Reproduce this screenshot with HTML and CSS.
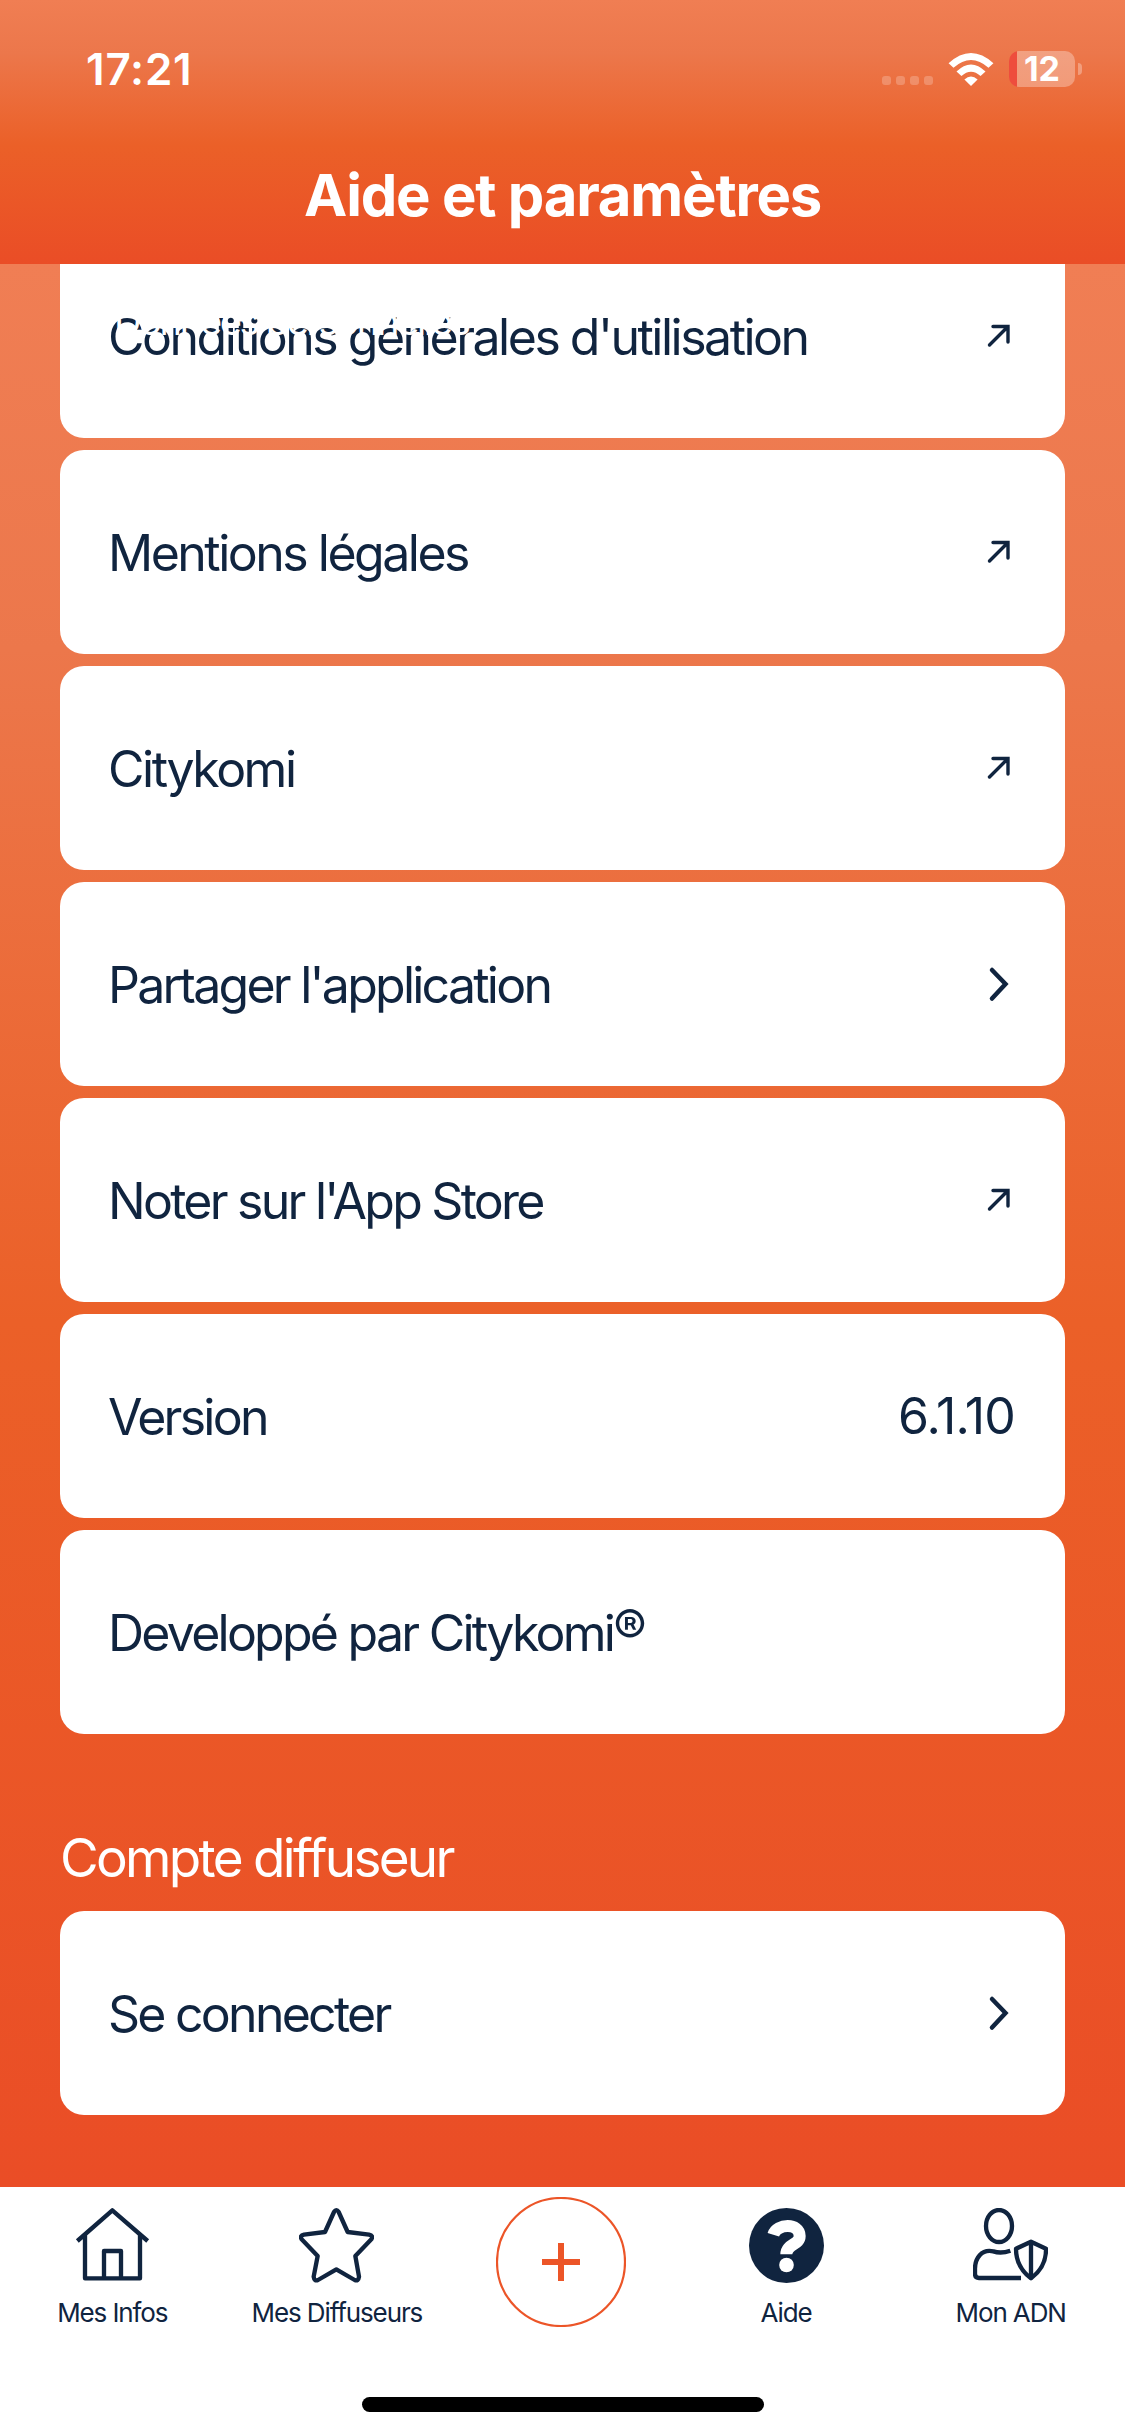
FILE: index.html
```
<!DOCTYPE html>
<html lang="fr">
<head>
  <meta charset="UTF-8">
  <meta name="viewport" content="width=device-width, initial-scale=1.0">
  <title>Aide et paramètres</title>
  <link rel="stylesheet" href="styles.css">
</head>
<body>
  <header class="header">
    <div class="status">
      <span class="time">17:21</span>
      <div class="status-icons">
        <div class="signal"><i></i><i></i><i></i><i></i></div>
        <svg class="wifi" viewBox="0 0 138 100">
          <path d="M1 31Q69-31 137 31L122 45Q69-2 16 45Z"/>
          <path d="M25 56Q69 13 113 56L98 70Q69 44 40 70Z"/>
          <path d="M49 80Q69 62 89 80L69 100Z"/>
        </svg>
        <div class="battery"><span>12</span></div>
        <div class="battery-tip"></div>
      </div>
    </div>
    <h1 class="title">Aide et paramètres</h1>
  </header>

  <main class="content">
    <span class="ghost">Données personnelles</span>
    <div class="list">
      <a class="card">
        <span class="label long">Conditions générales d'utilisation</span>
        <svg class="icon" viewBox="0 0 30 36"><path class="thin" d="M4.5 27L23 8.5M8 8.5H23V24"/></svg>
      </a>
      <a class="card">
        <span class="label long">Mentions légales</span>
        <svg class="icon" viewBox="0 0 30 36"><path class="thin" d="M4.5 27L23 8.5M8 8.5H23V24"/></svg>
      </a>
      <a class="card">
        <span class="label long">Citykomi</span>
        <svg class="icon" viewBox="0 0 30 36"><path class="thin" d="M4.5 27L23 8.5M8 8.5H23V24"/></svg>
      </a>
      <a class="card">
        <span class="label">Partager l'application</span>
        <svg class="icon" viewBox="0 0 30 36"><path d="M7 4L20.5 18L7 32.5"/></svg>
      </a>
      <a class="card">
        <span class="label">Noter sur l'App Store</span>
        <svg class="icon" viewBox="0 0 30 36"><path class="thin" d="M4.5 27L23 8.5M8 8.5H23V24"/></svg>
      </a>
      <div class="card">
        <span class="label">Version</span>
        <span class="value">6.1.10</span>
      </div>
      <div class="card">
        <span class="label">Developpé par Citykomi<span class="reg">®</span></span>
      </div>
    </div>

    <h2 class="section">Compte diffuseur</h2>
    <a class="card">
      <span class="label">Se connecter</span>
      <svg class="icon" viewBox="0 0 30 36"><path d="M7 4L20.5 18L7 32.5"/></svg>
    </a>
  </main>

  <nav class="tabs">
    <a class="tab">
      <svg class="tab-icon" viewBox="0 0 225 225">
        <path d="M7 99L112 7L218 99M30 82V211H195V82M87 211V129H138V211"/>
      </svg>
      <span>Mes Infos</span>
    </a>
    <a class="tab">
      <svg class="tab-icon" viewBox="0 0 225 225">
        <path d="M105 12Q112 1 119 12L146 72L210 80Q224 83 217 94L169 144L180 206Q178 221 167 216L112 184L57 216Q46 221 44 206L56 144L8 94Q1 83 15 80L78 72Z"/>
      </svg>
      <span>Mes Diffuseurs</span>
    </a>
    <a class="tab">
      <svg class="add" viewBox="0 0 130 130">
        <circle cx="65" cy="65" r="64"/>
        <path d="M65 46V84M46 65H84"/>
      </svg>
    </a>
    <a class="tab">
      <svg class="tab-icon help" viewBox="0 0 225 225">
        <circle class="disc" cx="112.5" cy="112.5" r="112.5"/>
        <path d="M73 80C83 47 152 43 152 84C152 112 112 107 112 139"/>
        <circle class="dot" cx="112.5" cy="171" r="22"/>
      </svg>
      <span>Aide</span>
    </a>
    <a class="tab">
      <svg class="tab-icon" viewBox="0 0 225 225">
        <ellipse cx="78" cy="54" rx="39" ry="48"/>
        <path d="M112 128Q84 138 61 130C25 122 6 152 6 182V198Q6 210 18 210H144"/>
        <path d="M174 101L219 122Q220 177 174 211Q129 177 129 122ZM174 101V211"/>
      </svg>
      <span>Mon ADN</span>
    </a>
    <div class="home-bar"></div>
  </nav>
</body>
</html>
```
FILE: styles.css
```
* {
  box-sizing: border-box;
}

body {
  margin: 0;
  width: 1125px;
  height: 2436px;
  display: flex;
  flex-direction: column;
  overflow: hidden;
  font-family: Inter, "Liberation Sans", sans-serif;
  color: #10243f;
}

.header {
  height: 264px;
  color: white;
  background: linear-gradient(#f07e53, #ec774b 20%, #eb6028 55%, #ea4d26);
}

.status {
  height: 138px;
  padding: 0 43px 0 86px;
  display: flex;
  justify-content: space-between;
  align-items: center;
}

.time {
  font-size: 44px;
  font-weight: 600;
  letter-spacing: 0.8px;
}

.status-icons {
  display: flex;
  align-items: center;
}

.signal {
  display: flex;
  gap: 5px;
  padding-top: 22px;
  margin-right: 15px;
}

.signal i {
  width: 9px;
  height: 9px;
  border-radius: 3px;
  background: rgba(255, 255, 255, 0.22);
}

.wifi {
  width: 46px;
  height: 33px;
  margin-right: 15px;
  fill: white;
}

.battery {
  width: 66px;
  height: 36px;
  border-radius: 10px;
  background: linear-gradient(90deg, #ee4d3d 8px, rgba(255, 255, 255, 0.3) 8px);
  font-size: 34px;
  font-weight: 700;
  line-height: 36px;
  text-align: center;
}

.battery-tip {
  width: 4px;
  height: 12px;
  margin-left: 3px;
  border-radius: 0 4px 4px 0;
  background: rgba(255, 255, 255, 0.3);
}

.title {
  margin: 0;
  font-size: 58px;
  font-weight: 700;
  line-height: 114px;
  text-align: center;
  letter-spacing: -1.2px;
}

.content {
  position: relative;
  height: 1923px;
  padding: 0 60px;
  overflow: hidden;
  background: linear-gradient(#f07e54, #ec774b 20%, #eb6028 55%, #ea4d26);
}

.list {
  display: flex;
  flex-direction: column;
  gap: 12px;
  margin-top: -30px;
}

.card {
  height: 204px;
  padding: 0 50px 0 48px;
  display: flex;
  justify-content: space-between;
  align-items: center;
  border-radius: 24px;
  background: white;
  font-size: 50px;
}

.label {
  padding-top: 2px;
  letter-spacing: -2.75px;
}

.label.long {
  letter-spacing: -2.5px;
}

.value {
  letter-spacing: -0.8px;
}

.icon {
  width: 30px;
  height: 36px;
  fill: none;
  stroke: #10243f;
  stroke-width: 4.5;
  stroke-linecap: round;
}

.icon .thin {
  stroke-width: 3.4;
}

.reg {
  position: relative;
  top: -5px;
}

/* old heading left floating above the first row */
.ghost {
  position: absolute;
  top: 30px;
  left: 114px;
  color: white;
  font-size: 38px;
  line-height: 54px;
  letter-spacing: -2.3px;
}

.section {
  margin: 0;
  padding-top: 88px;
  height: 177px;
  color: white;
  font-size: 53px;
  font-weight: 400;
  line-height: 72px;
  letter-spacing: -2.7px;
}

.tabs {
  position: relative;
  height: 249px;
  padding-right: 2px;
  display: flex;
  background: white;
}

.tab {
  flex: 1;
  display: flex;
  flex-direction: column;
  align-items: center;
  font-size: 26px;
  letter-spacing: -1.1px;
}

.tab-icon {
  width: 75px;
  height: 75px;
  margin: 21px 0 14px;
  fill: none;
  stroke: #10243f;
  stroke-width: 13;
  stroke-linejoin: round;
}

.help path {
  stroke: white;
  stroke-width: 36;
}

.help .disc {
  fill: #10243f;
  stroke: none;
}

.help .dot {
  fill: white;
  stroke: none;
}

.add {
  width: 130px;
  height: 130px;
  margin-top: 10px;
  fill: none;
  stroke: #ec5528;
  stroke-width: 2.2;
}

.add path {
  stroke-width: 6;
}

.home-bar {
  position: absolute;
  left: 362px;
  bottom: 24px;
  width: 402px;
  height: 15px;
  border-radius: 8px;
  background: black;
}
```
